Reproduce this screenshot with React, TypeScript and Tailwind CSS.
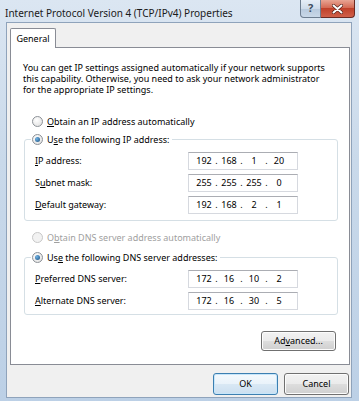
import { Fragment } from 'react';

// small helper for mnemonic (underlined access key) labels
const Mn = ({ pre = '', k, post = '' }: { pre?: string; k: string; post?: string }) => (
  <>
    {pre}
    <span className="underline decoration-[1px] underline-offset-[1px]">{k}</span>
    {post}
  </>
);

const Radio = ({ checked, disabled }: { checked?: boolean; disabled?: boolean }) => (
  <span
    className={
      disabled
        ? 'flex h-[11px] w-[11px] shrink-0 items-center justify-center rounded-full border border-[#c8c8c8] bg-[#f2f2f2]'
        : 'flex h-[11px] w-[11px] shrink-0 items-center justify-center rounded-full border border-[#8c9197] bg-[radial-gradient(circle_at_40%_35%,#ffffff,#dcdcdc)]'
    }
  >
    {checked && <span className="h-[5px] w-[5px] rounded-full bg-[radial-gradient(circle_at_35%_35%,#6fb3e6,#1b4f7d)]" />}
  </span>
);

const IpField = ({ parts }: { parts: string[] }) => (
  <div className="flex h-[18px] w-[110px] items-center border border-[#d6d9df] border-t-[#abadb3] bg-white pl-[5px]">
    {parts.map((p, i) => (
      <Fragment key={i}>
        <span className="w-[20px] text-center">{p}</span>
        {i < 3 && <span className="w-[5px] text-center">.</span>}
      </Fragment>
    ))}
  </div>
);

const Row = ({ label, parts }: { label: React.ReactNode; parts: string[] }) => (
  <div className="flex h-[18px] items-center pl-[4px]">
    <span className="w-[153px]">{label}</span>
    <IpField parts={parts} />
  </div>
);

const Button = ({ children, w, h, focused }: { children: React.ReactNode; w: string; h: string; focused?: boolean }) => (
  <div
    className={`flex items-center justify-center rounded-[3px] border ${w} ${h} ${
      focused
        ? 'border-[#3c7fb1] bg-[linear-gradient(#f4f9fd_0%,#eaf3fa_48%,#d9e8f4_52%,#cbdff0_100%)] shadow-[inset_0_0_0_1px_#c7e6fa]'
        : 'border-[#707070] bg-[linear-gradient(#f2f2f2_0%,#ebebeb_48%,#dddddd_52%,#cfcfcf_100%)] shadow-[inset_0_0_0_1px_#fcfcfc]'
    }`}
  >
    {children}
  </div>
);

export default function App() {
  return (
    <div className="flex h-[401px] w-[359px] flex-col bg-[linear-gradient(180deg,#dbe6f2_0%,#c9d9ea_40%,#bcd0e6_100%)] font-['Noto_Sans',sans-serif] text-[9px] text-black">
      {/* Title bar */}
      <div className="flex h-[22px] items-start justify-between">
        <span className="mt-[6px] pl-[5px] text-[10px] leading-[14px] text-[#1a1a1a]">
          Internet Protocol Version 4 (TCP/IPv4) Properties
        </span>
        <div className="mr-[4px] flex">
          <div className="flex h-[18px] w-[21px] items-center justify-center rounded-bl-[4px] border border-t-0 border-[#6d7d90] bg-[linear-gradient(#e6eef7_0%,#cfdceb_50%,#b7c9dd_51%,#c9d8e8_100%)] text-[11px] font-bold text-[#3d4d60]">
            ?
          </div>
          <div className="flex h-[18px] w-[34px] items-center justify-center rounded-br-[4px] border border-l-0 border-t-0 border-[#6b2a22] bg-[linear-gradient(#e8a493_0%,#d46b55_45%,#c0412a_50%,#d0604a_100%)]">
            <svg width="11" height="10" viewBox="0 0 11 10">
              <path d="M1.5 1.5 L9.5 8.5 M9.5 1.5 L1.5 8.5" stroke="#4a1a14" strokeWidth="3.2" strokeLinecap="round" />
              <path d="M1.5 1.5 L9.5 8.5 M9.5 1.5 L1.5 8.5" stroke="#ffffff" strokeWidth="2" strokeLinecap="round" />
            </svg>
          </div>
        </div>
      </div>

      {/* Client area */}
      <div className="mb-[3px] ml-[6px] mr-[7px] flex flex-1 flex-col border border-[#8fa3bb] bg-[#f0f0f0] pl-[3px] pt-[5px]">
        {/* Tab header */}
        <div className="relative z-10 -mb-[1px] flex h-[20px] w-[46px] items-center justify-center rounded-t-[2px] border border-b-0 border-[#898c95] bg-white">
          General
        </div>

        {/* Tab panel */}
        <div className="flex h-[318px] w-[340px] flex-col border border-[#898c95] bg-white pl-[12px] pt-[14px]">
          <p className="whitespace-nowrap leading-[11px]">
            You can get IP settings assigned automatically if your network supports
            <br />
            this capability. Otherwise, you need to ask your network administrator
            <br />
            for the appropriate IP settings.
          </p>

          <div className="ml-[9px] mt-[20px] flex h-[13px] items-center gap-[4px]">
            <Radio />
            <span>
              <Mn k="O" post="btain an IP address automatically" />
            </span>
          </div>

          <fieldset className="ml-[1px] mt-[5px] w-[314px] rounded-[3px] border border-[#d5dfe5] pb-[6px] pl-[6px]">
            <legend className="px-[1px]">
              <div className="flex h-[13px] items-center gap-[4px] pr-[2px]">
                <Radio checked />
                <span>
                  <Mn pre="U" k="s" post="e the following IP address:" />
                </span>
              </div>
            </legend>
            <div className="mt-[6px] flex flex-col gap-[4px]">
              <Row label={<Mn k="I" post="P address:" />} parts={['192', '168', '1', '20']} />
              <Row label={<Mn pre="S" k="u" post="bnet mask:" />} parts={['255', '255', '255', '0']} />
              <Row label={<Mn k="D" post="efault gateway:" />} parts={['192', '168', '2', '1']} />
            </div>
          </fieldset>

          <div className="ml-[9px] mt-[10px] flex h-[13px] items-center gap-[4px] text-[#a0a0a0]">
            <Radio disabled />
            <span>
              <Mn pre="O" k="b" post="tain DNS server address automatically" />
            </span>
          </div>

          <fieldset className="ml-[1px] mt-[7px] w-[314px] rounded-[3px] border border-[#d5dfe5] pb-[4px] pl-[6px]">
            <legend className="px-[1px]">
              <div className="flex h-[13px] items-center gap-[4px] pr-[2px]">
                <Radio checked />
                <span>
                  <Mn pre="Us" k="e" post=" the following DNS server addresses:" />
                </span>
              </div>
            </legend>
            <div className="mt-[6px] flex flex-col gap-[4px]">
              <Row label={<Mn k="P" post="referred DNS server:" />} parts={['172', '16', '10', '2']} />
              <Row label={<Mn k="A" post="lternate DNS server:" />} parts={['172', '16', '30', '5']} />
            </div>
          </fieldset>

          <div className="mt-[16px] flex justify-end pr-[13px]">
            <Button w="w-[75px]" h="h-[20px]">
              <Mn pre="Ad" k="v" post="anced..." />
            </Button>
          </div>
        </div>

        {/* Dialog buttons */}
        <div className="mt-[8px] flex justify-end gap-[6px] pr-[2px]">
          <Button w="w-[65px]" h="h-[22px]" focused>
            OK
          </Button>
          <Button w="w-[65px]" h="h-[22px]">
            Cancel
          </Button>
        </div>
      </div>
    </div>
  );
}
